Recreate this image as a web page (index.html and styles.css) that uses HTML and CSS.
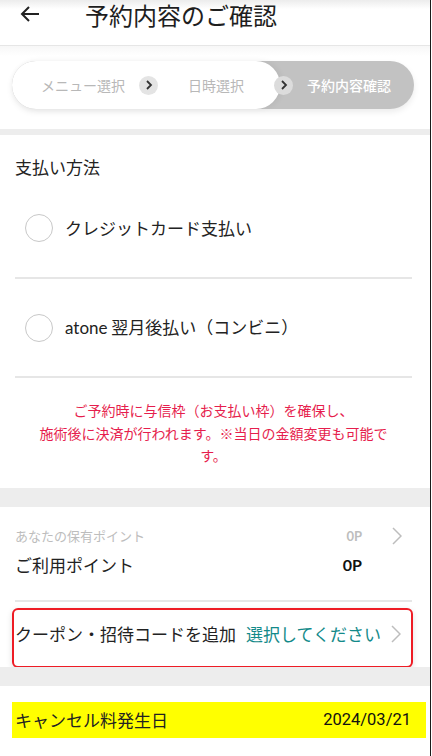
FILE: index.html
```html
<!DOCTYPE html>
<html lang="ja">
<head>
<meta charset="utf-8">
<title>予約内容のご確認</title>
<link rel="stylesheet" href="styles.css">
</head>
<body>
<div class="page">
  <header class="hdr">
    <svg class="back" width="20" height="16" viewBox="0 0 20 16"><path d="M19 8H2M9 1L2 8l7 7" fill="none" stroke="#222" stroke-width="2"/></svg>
    <h1 class="title">予約内容のご確認</h1>
  </header>

  <div class="steps-wrap">
    <div class="steps">
      <div class="steps-done">
        <span class="step">メニュー選択</span>
        <span class="step-chev"><svg width="8" height="10" viewBox="0 0 8 10"><path d="M2 1l4 4-4 4" fill="none" stroke="#333" stroke-width="1.8"/></svg></span>
        <span class="step step-2">日時選択</span>
      </div>
      <span class="step-chev step-chev-2"><svg width="8" height="10" viewBox="0 0 8 10"><path d="M2 1l4 4-4 4" fill="none" stroke="#333" stroke-width="1.8"/></svg></span>
      <span class="step-cur">予約内容確認</span>
    </div>
  </div>

  <div class="band band-thin"></div>

  <section class="pay">
    <h2 class="sec-title">支払い方法</h2>
    <div class="radio-row">
      <span class="radio"></span>
      <span class="radio-label">クレジットカード支払い</span>
    </div>
    <div class="divider"></div>
    <div class="radio-row">
      <span class="radio"></span>
      <span class="radio-label"><span class="latin">atone</span> 翌月後払い（コンビニ）</span>
    </div>
    <div class="divider"></div>
    <p class="note">ご予約時に与信枠（お支払い枠）を確保し、<br>施術後に決済が行われます。※当日の金額変更も可能です。</p>
  </section>

  <div class="band"></div>

  <section class="points">
    <div class="pt-row pt-row-sub">
      <span class="pt-label">あなたの保有ポイント</span>
      <span class="pt-val pt-val-sub">0P</span>
      <span class="chev-slot"><svg class="chev" width="10" height="18" viewBox="0 0 10 18"><path d="M1 1l8 8-8 8" fill="none" stroke="#bdbdbd" stroke-width="1.5"/></svg></span>
    </div>
    <div class="pt-row pt-row-main">
      <span class="pt-label">ご利用ポイント</span>
      <span class="pt-val">0P</span>
      <span class="chev-slot"></span>
    </div>
    <div class="divider divider-pt"></div>
    <div class="coupon">
      <span class="coupon-label">クーポン・招待コードを追加</span>
      <span class="coupon-sel">選択してください</span>
      <svg class="chev" width="10" height="18" viewBox="0 0 10 18"><path d="M1 1l8 8-8 8" fill="none" stroke="#bdbdbd" stroke-width="1.5"/></svg>
    </div>
  </section>

  <div class="band band-2"></div>

  <section class="cancel">
    <div class="cancel-row">
      <span>キャンセル料発生日</span>
      <span class="date">2024/03/21</span>
    </div>
  </section>
</div>
</body>
</html>
```

FILE: styles.css
```css
* { box-sizing: border-box; }
html, body { margin: 0; padding: 0; background: #fff; }
body {
  font-family: "Noto Sans CJK JP", "Noto Sans", sans-serif;
  color: #222;
}
.page {
  width: 431px;
  height: 756px;
  overflow: hidden;
  border-right: 1px solid #1a1a1a;
  background: #fff;
}
.hdr {
  height: 46px;
  display: flex;
  align-items: flex-start;
  border-bottom: 1px solid #e6e6e6;
  background: linear-gradient(#ececec 0, #fff 9px);
}
.back { margin: 6px 0 0 20px; }
.title {
  margin: 0 0 0 45px;
  font-size: 24px;
  font-weight: 400;
  line-height: 30px;
  color: #1e1e1e;
}
.steps-wrap {
  height: 83px;
  padding: 15px 16px 0 12px;
  background: linear-gradient(#f7f7f7 0, #fff 10px);
}
.steps {
  height: 48px;
  border-radius: 24px;
  background: #c2c2c2;
  display: flex;
  align-items: center;
  box-shadow: 0 3px 6px rgba(0,0,0,0.08);
}
.steps-done {
  width: 268px;
  height: 48px;
  border-radius: 24px;
  background: #fff;
  display: flex;
  align-items: center;
  padding-left: 29px;
  box-shadow: 2px 0 6px rgba(0,0,0,0.06);
}
.step { font-size: 14px; color: #b8b8b8; line-height: 20px; }
.step-2 { margin-left: 30px; }
.step-chev {
  width: 19px;
  height: 19px;
  border-radius: 50%;
  background: #e4e4e4;
  display: flex;
  align-items: center;
  justify-content: center;
  margin-left: 14px;
  flex: none;
}
.step-chev-2 {
  margin-left: -6px;
  background: #dcdcdc;
  position: relative;
}
.step-cur {
  margin-left: 14px;
  font-size: 14px;
  color: #fff;
  font-weight: 500;
}
.band { height: 19px; background: #ededed; }
.band-thin { height: 6px; }
.pay { padding: 20px 18px 21px 15px; }
.sec-title {
  margin: 0;
  font-size: 17px;
  font-weight: 400;
  line-height: 24px;
}
.radio-row {
  height: 98px;
  display: flex;
  align-items: center;
  padding-left: 10px;
}
.radio-row + .divider + .radio-row { height: 97px; }
.radio {
  width: 28px;
  height: 28px;
  border-radius: 50%;
  border: 1px solid #c8c8c8;
  flex: none;
}
.radio-label {
  margin-left: 12px;
  font-size: 17px;
  line-height: 24px;
}
.latin { font-family: "Lato", sans-serif; font-size: 17px; }
.divider { height: 2px; background: #e6e6e6; }
.note {
  margin: 21px 20px 0 20px;
  font-size: 14px;
  line-height: 22.5px;
  color: #e61e4d;
  text-align: center;
}
.points { padding: 20px 18px 0 15px; }
.pt-row { display: flex; align-items: center; }
.pt-row-sub { height: 18px; }
.pt-row-main { height: 24px; margin-top: 8px; }
.pt-label { flex: 1; }
.pt-row-sub .pt-label { font-size: 13px; color: #bdbdbd; }
.pt-row-main .pt-label { font-size: 17px; }
.pt-val {
  font-family: "Lato", sans-serif;
  font-weight: 700;
  font-size: 16px;
  color: #111;
}
.pt-val-sub { font-size: 13px; color: #bdbdbd; }
.chev-slot {
  width: 50px;
  display: flex;
  justify-content: flex-end;
  padding-right: 10px;
}
.divider-pt { margin-top: 23px; }
.coupon {
  margin: 6px -1px 0 -3px;
  height: 60px;
  border: 2px solid #ee1c25;
  border-radius: 6px;
  box-shadow: 0 2px 6px rgba(0,0,0,0.12);
  display: flex;
  align-items: flex-start;
  padding: 12px 10px 0 1px;
  background: #fff;
}
.coupon-label { flex: 1; font-size: 17px; line-height: 24px; }
.coupon-sel { font-size: 17px; line-height: 24px; color: #138a8a; }
.coupon .chev { margin: 3px 0 0 10px; }
.band-2 { height: 19px; margin-top: -1px; }
.cancel { padding: 16px 4px 0 12px; }
.cancel-row {
  height: 36px;
  background: #ffff00;
  display: flex;
  align-items: center;
  justify-content: space-between;
  padding: 0 15px 0 3px;
  font-size: 17px;
}
.date { font-family: "Roboto", sans-serif; font-size: 16.5px; color: #111; }
```
